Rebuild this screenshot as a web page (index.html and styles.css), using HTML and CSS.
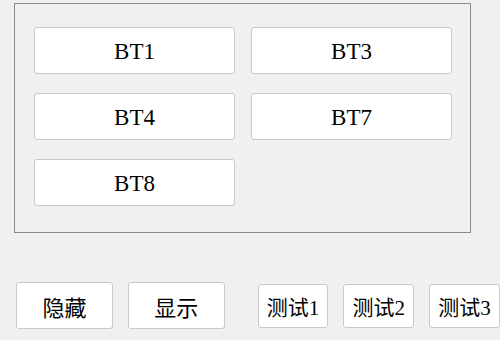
FILE: index.html
```html
<!DOCTYPE html>
<html>
<head>
<meta charset="utf-8">
<link rel="stylesheet" href="styles.css">
</head>
<body>
<div class="frame">
  <div class="grid">
    <button class="btn big">BT1</button>
    <button class="btn big">BT3</button>
    <button class="btn big">BT4</button>
    <button class="btn big">BT7</button>
    <button class="btn big">BT8</button>
  </div>
</div>
<div class="bar">
  <button class="btn mid">隐藏</button>
  <button class="btn mid">显示</button>
  <button class="btn small first">测试1</button>
  <button class="btn small">测试2</button>
  <button class="btn small">测试3</button>
</div>
</body>
</html>
```
FILE: styles.css
```css
html, body {
  margin: 0;
  padding: 0;
  background: #f0f0f0;
  width: 500px;
  height: 340px;
  overflow: hidden;
}
body {
  font-family: "Liberation Serif", "Noto Sans CJK SC", serif;
  color: #000;
}
.frame {
  box-sizing: border-box;
  margin: 3px 0 0 14px;
  width: 457px;
  height: 230px;
  border: 1px solid #868a92;
  padding: 23px 0 0 19px;
}
.grid {
  display: grid;
  grid-template-columns: 201px 201px;
  grid-auto-rows: 47px;
  column-gap: 16px;
  row-gap: 19px;
}
.btn {
  box-sizing: border-box;
  background: #fff;
  border: 1px solid #c9c9c9;
  border-radius: 3px;
  font-family: "Liberation Serif", "Noto Sans CJK SC", serif;
  font-size: 23px;
  color: #000;
  padding: 0;
  margin: 0;
  display: flex;
  align-items: center;
  justify-content: center;
}
.big {
  padding-top: 2px;
}
.bar {
  display: flex;
  align-items: center;
  margin: 49px 0 0 16px;
  height: 47px;
  gap: 15px;
}
.mid {
  width: 97px;
  height: 47px;
  font-size: 22px;
}
.small {
  width: 71px;
  height: 44px;
  font-size: 21px;
}
.first {
  margin-left: 18px;
}
```
